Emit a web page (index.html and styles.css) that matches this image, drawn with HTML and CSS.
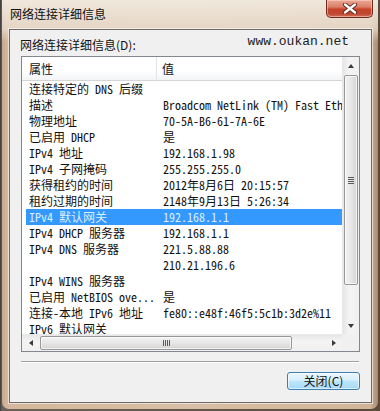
FILE: index.html
```html
<!DOCTYPE html>
<html lang="zh-CN">
<head>
<meta charset="utf-8">
<title>网络连接详细信息</title>
<link rel="stylesheet" href="styles.css">
</head>
<body>
<div class="window">
  <div class="titlebar">
    <div class="title">网络连接详细信息</div>
    <div class="close-x">
      <svg width="16" height="11" viewBox="0 0 16 11">
        <path d="M3 1.5 L13 9.5 M13 1.5 L3 9.5" stroke="#5a2418" stroke-width="4.2" stroke-linecap="round"/>
        <path d="M3 1.5 L13 9.5 M13 1.5 L3 9.5" stroke="#ffffff" stroke-width="2.4" stroke-linecap="round"/>
      </svg>
    </div>
  </div>
  <div class="client">
    <div class="label-row">
      <div class="label">网络连接详细信息(<u>D</u>):</div>
      <div class="site">www.oukan.net</div>
    </div>
    <div class="lv">
      <div class="lv-main">
        <div class="lv-head">
          <div class="hcell hc1">属性</div>
          <div class="hcell hc2">值</div>
        </div>
        <div class="rows">
          <div class="row"><span class="c1">连接特定的 DNS 后缀</span><span class="c2"></span></div>
          <div class="row"><span class="c1">描述</span><span class="c2">Broadcom NetLink (TM) Fast Ethernet</span></div>
          <div class="row"><span class="c1">物理地址</span><span class="c2">70-5A-B6-61-7A-6E</span></div>
          <div class="row"><span class="c1">已启用 DHCP</span><span class="c2">是</span></div>
          <div class="row"><span class="c1">IPv4 地址</span><span class="c2">192.168.1.98</span></div>
          <div class="row"><span class="c1">IPv4 子网掩码</span><span class="c2">255.255.255.0</span></div>
          <div class="row"><span class="c1">获得租约的时间</span><span class="c2">2012年8月6日 20:15:57</span></div>
          <div class="row"><span class="c1">租约过期的时间</span><span class="c2">2148年9月13日 5:26:34</span></div>
          <div class="row sel"><span class="c1">IPv4 默认网关</span><span class="c2">192.168.1.1</span></div>
          <div class="row"><span class="c1">IPv4 DHCP 服务器</span><span class="c2">192.168.1.1</span></div>
          <div class="row"><span class="c1">IPv4 DNS 服务器</span><span class="c2">221.5.88.88</span></div>
          <div class="row"><span class="c1"></span><span class="c2">210.21.196.6</span></div>
          <div class="row"><span class="c1">IPv4 WINS 服务器</span><span class="c2"></span></div>
          <div class="row"><span class="c1">已启用 NetBIOS ove...</span><span class="c2">是</span></div>
          <div class="row"><span class="c1">连接-本地 IPv6 地址</span><span class="c2">fe80::e48f:46f5:5c1b:3d2e%11</span></div>
          <div class="row"><span class="c1">IPv6 默认网关</span><span class="c2"></span></div>
        </div>
      </div>
      <div class="vscroll">
        <div class="sbtn"><span class="tri up"></span></div>
        <div class="vtrack">
          <div class="vthumb"><span class="hgrip"></span></div>
        </div>
        <div class="sbtn"><span class="tri down"></span></div>
      </div>
      <div class="hscroll">
        <div class="sbtn"><span class="tri left"></span></div>
        <div class="htrack">
          <div class="hthumb"><span class="vgrip"></span></div>
        </div>
        <div class="sbtn"><span class="tri right"></span></div>
      </div>
      <div class="corner"></div>
    </div>
    <div class="sep"></div>
    <div class="btn-row">
      <div class="btn">关闭(<u>C</u>)</div>
    </div>
  </div>
</div>
</body>
</html>
```
FILE: styles.css
```css
html, body {
  margin: 0;
  padding: 0;
}
body {
  width: 380px;
  height: 411px;
  overflow: hidden;
  background: linear-gradient(90deg, #3a3a3a 0, #6a625a 2px, #5a4a3c 100%);
  font-family: "Noto Sans CJK SC", sans-serif;
  font-size: 12px;
  color: #000;
}
.window {
  margin-left: 2px;
  width: 376px;
  height: 409px;
  box-sizing: border-box;
  padding: 0 6px 6px 7px;
  border-radius: 0 0 7px 7px;
  background:
    linear-gradient(180deg, rgba(242,234,224,0.95) 0, rgba(234,222,208,0.75) 29px, rgba(214,190,166,0) 42px),
    linear-gradient(90deg, #c6a78c 0, #d4b79c 5px, #d8bea4 50%, #d2b499 368px, #a88a70 100%);
  display: flex;
  flex-direction: column;
}
.titlebar {
  height: 29px;
  display: flex;
  align-items: flex-start;
  flex: none;
}
.title {
  margin-top: 7px;
  margin-left: 1px;
  line-height: 14px;
  font-size: 12px;
  color: #111;
}
.close-x {
  margin-left: auto;
  margin-right: -1px;
  width: 47px;
  height: 18px;
  box-sizing: border-box;
  border: 1px solid #6e2c20;
  border-top: none;
  border-radius: 0 0 5px 5px;
  background: linear-gradient(180deg, #eba896 0%, #dc8068 40%, #c6432a 55%, #c04630 80%, #d26e55 100%);
  display: flex;
  align-items: center;
  justify-content: center;
  box-shadow: inset 0 0 0 1px rgba(255,220,210,0.5);
}
.close-x svg { display: block; }
.client {
  height: 374px;
  box-sizing: border-box;
  border: 1px solid #6f6a66;
  box-shadow: 0 0 0 1px rgba(255,255,255,0.55);
  background: #f0f0f0;
  padding: 7px 0 0 11px;
  flex: none;
}
.label-row {
  width: 339px;
  height: 16px;
  display: flex;
  align-items: flex-start;
}
.label {
  line-height: 16px;
  margin-left: -1px;
  color: #111;
}
.label u, .btn u { text-decoration: none; }
.site {
  margin-left: auto;
  margin-right: 11px;
  margin-top: -3px;
  line-height: 16px;
  font-family: "Liberation Mono", monospace;
  font-size: 13px;
  color: #222;
}
.lv {
  margin-top: 3px;
  width: 339px;
  height: 296px;
  box-sizing: border-box;
  border: 1px solid #828790;
  background: #fff;
  display: grid;
  grid-template-columns: 320px 17px;
  grid-template-rows: 277px 17px;
}
.lv-main {
  overflow: hidden;
}
.lv-head {
  height: 23px;
  border-bottom: 1px solid #d5d5d5;
  display: flex;
  background: linear-gradient(180deg, #ffffff 0, #ffffff 60%, #f3f4f6 100%);
}
.hcell {
  line-height: 23px;
  font-size: 12px;
  color: #111;
  box-sizing: border-box;
}
.hc1 {
  width: 135px;
  padding-left: 7px;
  border-right: 1px solid #e2e3e5;
}
.hc2 {
  flex: 1;
  padding-left: 5px;
}
.rows {
  padding-left: 4px;
}
.row {
  height: 16px;
  line-height: 16px;
  display: flex;
  white-space: nowrap;
  font-family: "Noto Sans Mono CJK SC", "Liberation Mono", "Noto Sans CJK SC", monospace;
  font-size: 12px;
  color: #111;
}
.row .c1 {
  width: 131px;
  padding-left: 3px;
  box-sizing: border-box;
  flex: none;
  overflow: hidden;
}
.row .c2 {
  padding-left: 6px;
  flex: none;
}
.row.sel {
  background: #3399ff;
  color: #dceeff;
}
.vscroll {
  display: flex;
  flex-direction: column;
  background: linear-gradient(90deg, #e6e6e6 0, #f4f4f4 40%, #f0f0f0 100%);
  border-left: 1px solid #e9e9e9;
}
.hscroll {
  display: flex;
  background: linear-gradient(180deg, #e6e6e6 0, #f4f4f4 40%, #f0f0f0 100%);
  border-top: 1px solid #e9e9e9;
}
.corner {
  background: #f0f0f0;
}
.sbtn {
  width: 17px;
  height: 17px;
  flex: none;
  display: flex;
  align-items: center;
  justify-content: center;
}
.vscroll .sbtn { width: 16px; }
.hscroll .sbtn { height: 16px; }
.tri {
  width: 0;
  height: 0;
  display: block;
}
.tri.up {
  border-left: 3.5px solid transparent;
  border-right: 3.5px solid transparent;
  border-bottom: 4px solid #3a3a3a;
}
.tri.down {
  border-left: 3.5px solid transparent;
  border-right: 3.5px solid transparent;
  border-top: 4px solid #3a3a3a;
}
.tri.left {
  border-top: 3.5px solid transparent;
  border-bottom: 3.5px solid transparent;
  border-right: 4px solid #3a3a3a;
}
.tri.right {
  border-top: 3.5px solid transparent;
  border-bottom: 3.5px solid transparent;
  border-left: 4px solid #3a3a3a;
}
.vtrack {
  flex: 1;
  padding-top: 1px;
}
.vthumb {
  height: 210px;
  margin: 0 0 0 1px;
  width: 14px;
  box-sizing: border-box;
  border: 1px solid #979797;
  border-radius: 2px;
  background: linear-gradient(90deg, #f2f2f2 0, #e6e6e6 50%, #d4d4d4 100%);
  box-shadow: inset 0 0 0 1px rgba(255,255,255,0.7);
  display: flex;
  align-items: center;
  justify-content: center;
}
.hgrip {
  width: 6px;
  height: 7px;
  background: repeating-linear-gradient(180deg, #5a5a5a 0, #5a5a5a 1px, transparent 1px, transparent 2px);
}
.htrack {
  flex: 1;
  padding-left: 1px;
}
.hthumb {
  width: 252px;
  height: 14px;
  margin-top: 1px;
  box-sizing: border-box;
  border: 1px solid #979797;
  border-radius: 2px;
  background: linear-gradient(180deg, #f2f2f2 0, #e6e6e6 50%, #d4d4d4 100%);
  box-shadow: inset 0 0 0 1px rgba(255,255,255,0.7);
  display: flex;
  align-items: center;
  justify-content: center;
}
.vgrip {
  width: 7px;
  height: 6px;
  background: repeating-linear-gradient(90deg, #5a5a5a 0, #5a5a5a 1px, transparent 1px, transparent 2px);
}
.sep {
  margin-top: 9px;
  width: 338px;
  height: 1px;
  background: #a0a0a0;
  border-bottom: 1px solid #ffffff;
}
.btn-row {
  width: 339px;
  margin-top: 9px;
  display: flex;
  justify-content: flex-end;
}
.btn {
  width: 73px;
  height: 18px;
  box-sizing: border-box;
  border: 1px solid #3c7fb1;
  border-radius: 3px;
  background: linear-gradient(180deg, #eaf6fd 0, #d9f0fc 45%, #bee6fd 50%, #a7d9f5 100%);
  box-shadow: inset 0 0 0 1px rgba(255,255,255,0.6);
  text-align: center;
  line-height: 16px;
  font-size: 12px;
  color: #111;
}
```
